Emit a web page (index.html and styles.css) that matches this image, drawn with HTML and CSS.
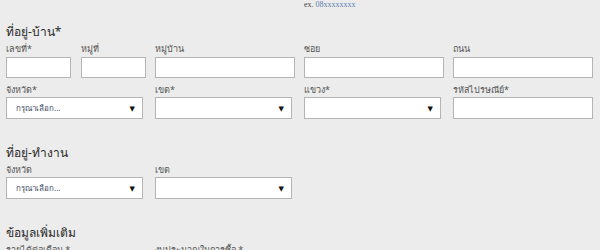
FILE: index.html
```html
<!DOCTYPE html>
<html lang="th">
<head>
    <meta charset="UTF-8">
    <meta name="viewport" content="width=device-width, initial-scale=1.0">
    <title>ที่อยู่</title>
    <link rel="stylesheet" href="styles.css">
</head>
<body>
    <div class="form">
        <div class="row row-5 hint-row">
            <div></div><div></div><div></div>
            <div class="hint">ex. <span class="hint-num">08xxxxxxxx</span></div>
        </div>

        <h3 class="section-title first">ที่อยู่-บ้าน*</h3>
        <div class="row row-5">
            <div class="field"><label>เลขที่*</label><input type="text"></div>
            <div class="field"><label>หมู่ที่</label><input type="text"></div>
            <div class="field"><label>หมู่บ้าน</label><input type="text"></div>
            <div class="field"><label>ซอย</label><input type="text"></div>
            <div class="field"><label>ถนน</label><input type="text"></div>
        </div>
        <div class="row row-4">
            <div class="field">
                <label>จังหวัด*</label>
                <div class="select"><span class="placeholder">กรุณาเลือก...</span><span class="arrow">&#9660;</span></div>
            </div>
            <div class="field">
                <label>เขต*</label>
                <div class="select"><span class="placeholder"></span><span class="arrow">&#9660;</span></div>
            </div>
            <div class="field">
                <label>แขวง*</label>
                <div class="select"><span class="placeholder"></span><span class="arrow">&#9660;</span></div>
            </div>
            <div class="field"><label>รหัสไปรษณีย์*</label><input type="text"></div>
        </div>

        <h3 class="section-title">ที่อยู่-ทำงาน</h3>
        <div class="row row-4">
            <div class="field">
                <label>จังหวัด</label>
                <div class="select"><span class="placeholder">กรุณาเลือก...</span><span class="arrow">&#9660;</span></div>
            </div>
            <div class="field">
                <label>เขต</label>
                <div class="select"><span class="placeholder"></span><span class="arrow">&#9660;</span></div>
            </div>
        </div>

        <h3 class="section-title">ข้อมูลเพิ่มเติม</h3>
        <div class="row row-4">
            <div class="field"><label>รายได้ต่อเดือน *</label></div>
            <div class="field"><label>งบประมาณในการซื้อ *</label></div>
        </div>
    </div>
</body>
</html>
```
FILE: styles.css
```css
body {
    margin: 0;
    background-color: #ececec;
    font-family: Tahoma, "Noto Sans", "DejaVu Sans", sans-serif;
    color: #333;
    overflow: hidden;
}
.form {
    width: 596px;
    margin-left: 6px;
}
.row {
    display: grid;
}
.row-5 {
    grid-template-columns: 1fr 1fr 2fr 2fr 2fr;
}
.row-4 {
    grid-template-columns: 1fr 1fr 1fr 1fr;
}
.field {
    padding-right: 9px;
}
.row-5 .field:nth-child(-n+2) {
    padding-right: 9.5px;
}
.hint-row {
    height: 8px;
}
.hint {
    font-family: "Liberation Serif", serif;
    font-size: 8px;
    line-height: 9px;
    color: #444;
}
.hint-num {
    color: #5a7fb0;
}
.section-title {
    font-size: 12px;
    font-weight: normal;
    color: #2a2a2a;
    margin: 27px 0 3px 0;
    line-height: 14px;
    height: 14px;
}
.section-title.first {
    margin-top: 17px;
}
label {
    display: block;
    font-size: 9px;
    line-height: 13px;
    height: 13px;
    color: #555;
}
input {
    display: block;
    box-sizing: border-box;
    width: 100%;
    height: 21px;
    margin: 2px 0 0 0;
    border: 1px solid #b4b4b4;
    background: #fff;
    padding: 0 4px;
}
.row-4 input {
    margin-top: 1px;
    height: 22px;
}
.row + .row {
    margin-top: 5px;
}
.select {
    box-sizing: border-box;
    display: flex;
    align-items: center;
    justify-content: space-between;
    width: calc(100% - 3px);
    height: 22px;
    margin-top: 1px;
    border: 1px solid #b4b4b4;
    background: #fff;
    padding: 0 7px 0 9px;
}
.placeholder {
    font-size: 8px;
    color: #3d4a66;
}
.arrow {
    font-size: 7px;
    color: #111;
}
```
